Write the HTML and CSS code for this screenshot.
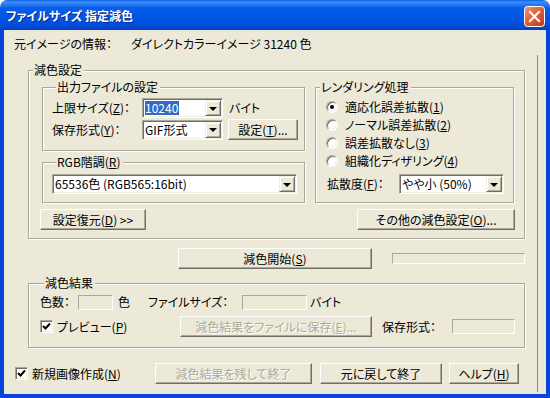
FILE: index.html
```html
<!DOCTYPE html>
<html lang="ja">
<head>
<meta charset="utf-8">
<title>ファイルサイズ 指定減色</title>
<link rel="stylesheet" href="styles.css">
</head>
<body>
<div class="window">
  <div class="titlebar">
    <span class="title">ファイルサイズ 指定減色</span>
    <svg class="close" width="21" height="21" viewBox="0 0 21 21">
      <defs>
        <linearGradient id="cg" x1="0" y1="0" x2="1" y2="1">
          <stop offset="0" stop-color="#F09A7C"/>
          <stop offset="0.45" stop-color="#E0603A"/>
          <stop offset="1" stop-color="#C2351A"/>
        </linearGradient>
      </defs>
      <rect x="0.5" y="0.5" width="20" height="20" rx="3" fill="url(#cg)" stroke="#fff"/>
      <path d="M6 6 L15 15 M15 6 L6 15" stroke="#fff" stroke-width="2.2" stroke-linecap="square"/>
    </svg>
  </div>
  <div class="client">
    <div class="content">
      <div class="info"><span class="info-label">元イメージの情報：</span><span>ダイレクトカラーイメージ 31240 色</span></div>

      <div class="group g-main">
        <div class="legend">減色設定</div>
        <div class="main-cols">
          <div class="left-col">
            <div class="group g-out">
              <div class="legend">出力ファイルの設定</div>
              <div class="row r1">
                <span class="lbl w90">上限サイズ(<u>Z</u>)：</span>
                <div class="combo w81"><span class="ctext"><span class="sel">10240</span></span><span class="dd"><i class="tri"></i></span></div>
                <span class="unit">バイト</span>
              </div>
              <div class="row r2">
                <span class="lbl w90">保存形式(<u>Y</u>)：</span>
                <div class="combo w81"><span class="ctext">GIF形式</span><span class="dd"><i class="tri"></i></span></div>
                <button class="btn b-set">設定(<u>T</u>)...</button>
              </div>
            </div>
            <div class="group g-rgb">
              <div class="legend">RGB階調(<u>R</u>)</div>
              <div class="combo w245 rgb-combo"><span class="ctext">65536色 (RGB565:16bit)</span><span class="dd"><i class="tri"></i></span></div>
            </div>
          </div>
          <div class="group g-render">
            <div class="legend">レンダリング処理</div>
            <div class="radios">
              <div class="radio-row"><span class="radio on"></span><span>適応化誤差拡散(<u>1</u>)</span></div>
              <div class="radio-row"><span class="radio"></span><span>ノーマル誤差拡散(<u>2</u>)</span></div>
              <div class="radio-row"><span class="radio"></span><span>誤差拡散なし(<u>3</u>)</span></div>
              <div class="radio-row"><span class="radio"></span><span>組織化ディザリング(<u>4</u>)</span></div>
            </div>
            <div class="row diff-row">
              <span class="lbl w72">拡散度(<u>F</u>)：</span>
              <div class="combo w105"><span class="ctext">やや小 (50%)</span><span class="dd"><i class="tri"></i></span></div>
            </div>
          </div>
        </div>
        <div class="btn-row">
          <button class="btn b-restore">設定復元(<u>D</u>) &gt;&gt;</button>
          <button class="btn b-other">その他の減色設定(<u>O</u>)...</button>
        </div>
      </div>

      <div class="start-row">
        <button class="btn b-start">減色開始(<u>S</u>)</button>
        <div class="progress"></div>
      </div>

      <div class="group g-result">
        <div class="legend">減色結果</div>
        <div class="row res1">
          <span class="w38">色数：</span>
          <span class="box w35"></span>
          <span class="w30 ml5">色</span>
          <span class="w94">ファイルサイズ：</span>
          <span class="box w65"></span>
          <span class="ml3">バイト</span>
        </div>
        <div class="row res2">
          <span class="chk-wrap w140"><span class="check"><svg width="9" height="9" viewBox="0 0 9 9"><path d="M1 4 L3.5 6.5 L8 1.5" fill="none" stroke="#000" stroke-width="2"/></svg></span><span>プレビュー(<u>P</u>)</span></span>
          <button class="btn b-save" disabled>減色結果をファイルに保存(<u>E</u>)...</button>
          <span class="w70 ml10">保存形式：</span>
          <span class="box w63"></span>
        </div>
      </div>

      <div class="bottom-row">
        <span class="chk-wrap w140"><span class="check"><svg width="9" height="9" viewBox="0 0 9 9"><path d="M1 4 L3.5 6.5 L8 1.5" fill="none" stroke="#000" stroke-width="2"/></svg></span><span>新規画像作成(<u>N</u>)</span></span>
        <button class="btn b-keep" disabled>減色結果を残して終了</button>
        <button class="btn b-revert">元に戻して終了</button>
        <button class="btn b-help">ヘルプ(<u>H</u>)</button>
      </div>
    </div>
    <div class="vline"></div>
  </div>
</div>
</body>
</html>
```
FILE: styles.css
```css
* { box-sizing: border-box; }
html, body { margin: 0; padding: 0; }
body {
  width: 550px; height: 398px; overflow: hidden;
  background: #ffffff;
  font-family: "Noto Sans CJK JP", "Noto Sans", sans-serif;
  font-size: 12px; color: #000;
  font-feature-settings: "palt";
  line-height: 14px;
}
u { text-decoration: underline; text-underline-offset: 1px; }

.window { width: 550px; height: 398px; display: flex; flex-direction: column; }

.titlebar {
  height: 30px; flex: none;
  border-radius: 7px 7px 0 0;
  background: linear-gradient(#0A5FE8 0px, #3D8FF8 2px, #2D7FF2 4px, #0A5DE8 8px, #0057E6 14px, #0053E0 22px, #0049D4 27px, #003FC4 30px);
  display: flex; align-items: center;
  padding: 0 5px 0 6px;
}
.title {
  flex: 1; color: #fff; font-weight: bold;
  text-shadow: 1px 1px #0B2A8A;
  margin-top: 1px;
}
.close { display: block; flex: none; margin-top: 3px; }

.client {
  flex: 1; display: flex;
  background: #ECE9D8;
  border: 4px solid #0846DA;
  border-top: 0;
}
.content { width: 533px; flex: none; }
.vline { width: 1px; flex: none; background: #8C8A80; margin: 25px 0 2px; }

.info { margin-top: 7px; padding-left: 10px; display: flex; }
.info-label { width: 117px; }

.group {
  border: 1px solid #ACA899;
  box-shadow: inset 1px 1px #fff, 1px 1px #fff;
}
.legend {
  display: block; width: fit-content;
  margin: -8px 0 0 4px; padding: 0 2px 0 1px;
  height: 14px; background: #ECE9D8;
}

.row { display: flex; align-items: center; }

.g-main { margin: 19px 0 0 24px; width: 497px; height: 169px; }
.main-cols { display: flex; gap: 10px; margin-top: 10px; padding-left: 13px; }
.left-col { width: 263px; display: flex; flex-direction: column; gap: 11px; }

.g-out { height: 64px; padding-left: 9px; }
.g-out .r1 { margin-top: 4px; height: 20px; }
.g-out .r2 { margin-top: 1px; height: 21px; }
.unit { margin-left: 6px; }
.b-set { width: 70px; margin-left: 5px; }

.g-rgb { height: 41px; padding-left: 9px; }
.rgb-combo { margin-top: 5px; }

.g-render { width: 199px; height: 116px; }
.radios { margin-top: 4px; padding-left: 10px; }
.radio-row { height: 18px; display: flex; align-items: center; gap: 7px; }
.radio {
  width: 12px; height: 12px; border-radius: 50%;
  background: #fff;
  border: 1px solid; border-color: #ACA899 #fff #fff #ACA899;
  box-shadow: inset 1px 1px #716F64, inset -1px -1px #F1EFE2;
  position: relative; display: block; flex: none;
}
.radio.on::after {
  content: ""; position: absolute; left: 3px; top: 3px;
  width: 4px; height: 4px; border-radius: 50%; background: #000;
}
.diff-row { margin-top: 4px; padding-left: 11px; height: 20px; }

.btn-row { display: flex; justify-content: space-between; margin-top: 6px; padding: 0 9px 0 11px; }
.b-restore { width: 106px; }
.b-other { width: 158px; }

.start-row { display: flex; align-items: center; margin-top: 9px; }
.b-start { width: 194px; margin-left: 174px; }
.progress {
  width: 133px; height: 11px; margin-left: 20px;
  border: 1px solid; border-color: #ACA899 #fff #fff #ACA899;
}

.g-result { margin: 14px 0 0 24px; width: 497px; height: 65px; padding-left: 11px; }
.res1 { margin-top: 4px; height: 16px; }
.res2 { margin-top: 6px; height: 21px; }
.box {
  height: 15px; display: block;
  border: 1px solid; border-color: #ACA899 #fff #fff #ACA899;
}
.b-save { width: 192px; }

.bottom-row { display: flex; align-items: center; margin-top: 15px; padding-left: 11px; }
.b-keep { width: 157px; }
.b-revert { width: 122px; margin-left: 8px; }
.b-help { width: 70px; margin-left: 7px; }

.chk-wrap { display: flex; align-items: center; gap: 4px; }
.check {
  width: 13px; height: 13px; display: flex; align-items: center; justify-content: center;
  background: #fff; flex: none;
  border: 1px solid; border-color: #ACA899 #fff #fff #ACA899;
  box-shadow: inset 1px 1px #716F64, inset -1px -1px #F1EFE2;
}
.check svg { display: block; }

.combo {
  height: 20px; display: flex; background: #fff; flex: none;
  border: 1px solid; border-color: #ACA899 #fff #fff #ACA899;
  box-shadow: inset 1px 1px #716F64, inset -1px -1px #F1EFE2;
  padding: 1px;
}
.ctext { flex: 1; padding-left: 1px; line-height: 16px; white-space: nowrap; overflow: hidden; }
.sel { background: #316AC5; color: #fff; padding: 0 1px 0 0; display: inline-block; height: 14px; line-height: 14px; margin-top: 1px; }
.dd {
  width: 16px; flex: none; display: flex; align-items: center; justify-content: center;
  background: #ECE9D8;
  border: 1px solid; border-color: #F1EFE2 #716F64 #716F64 #F1EFE2;
  box-shadow: inset 1px 1px #fff, inset -1px -1px #ACA899;
}
.tri { display: block; width: 0; height: 0; border-left: 4px solid transparent; border-right: 4px solid transparent; border-top: 4px solid #000; margin-top: 1px; }

.btn {
  font: inherit; font-feature-settings: "palt";
  height: 21px; padding: 0; flex: none;
  background: #ECE9D8; color: #000;
  border: 1px solid; border-color: #fff #716F64 #716F64 #fff;
  box-shadow: inset -1px -1px #ACA899;
  line-height: 19px; text-align: center; white-space: nowrap;
}
.btn:disabled { color: #ACA899; text-shadow: 1px 1px #fff; }

.w30 { width: 30px; flex: none; }
.w35 { width: 35px; flex: none; }
.w38 { width: 38px; flex: none; }
.w63 { width: 63px; flex: none; }
.w65 { width: 65px; flex: none; }
.w70 { width: 70px; flex: none; }
.w72 { width: 72px; flex: none; }
.w81 { width: 81px; }
.w90 { width: 90px; flex: none; }
.w94 { width: 94px; flex: none; }
.w105 { width: 105px; }
.w140 { width: 140px; flex: none; }
.w245 { width: 245px; }
.ml3 { margin-left: 3px; }
.ml5 { margin-left: 5px; }
.ml10 { margin-left: 10px; }
```
